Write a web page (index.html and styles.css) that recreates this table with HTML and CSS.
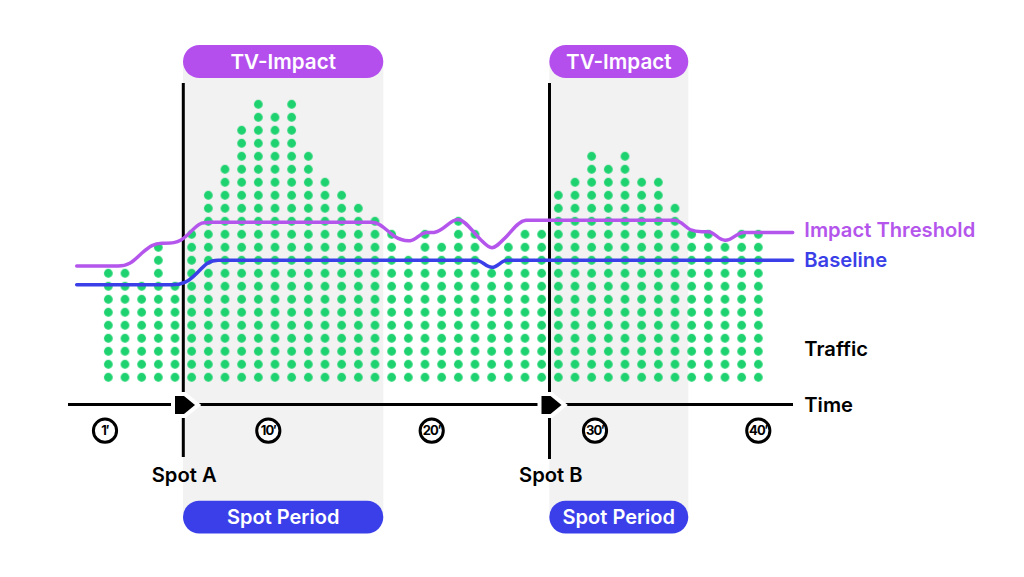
FILE: index.html
```html
<!DOCTYPE html>
<html lang="en">
<head>
<meta charset="utf-8">
<title>TV-Impact</title>
<link rel="stylesheet" href="styles.css">
</head>
<body>
<div class="canvas">
<svg class="chart" width="1024" height="577" viewBox="0 0 1024 577" xmlns="http://www.w3.org/2000/svg">
  <defs>
    <pattern id="dots" patternUnits="userSpaceOnUse" x="100" y="370.8" width="16.6667" height="13">
      <circle class="dot" cx="8.3333" cy="6.5" r="4.4"/>
    </pattern>
  </defs>

  <!-- spot periods -->
  <rect class="period" x="183" y="62" width="200.3" height="455"/>
  <rect class="period" x="549.3" y="62" width="139" height="455"/>

  <!-- traffic dots -->
  <g class="traffic">
    <rect x="100" y="266.8" width="16.6667" height="117"/>
    <rect x="116.667" y="266.8" width="16.6667" height="117"/>
    <rect x="133.333" y="279.8" width="16.6667" height="104"/>
    <rect x="150" y="240.8" width="16.6667" height="143"/>
    <rect x="166.667" y="279.8" width="16.6667" height="104"/>
    <rect x="183.333" y="227.8" width="16.6667" height="156"/>
    <rect x="200" y="188.8" width="16.6667" height="195"/>
    <rect x="216.667" y="162.8" width="16.6667" height="221"/>
    <rect x="233.333" y="123.8" width="16.6667" height="260"/>
    <rect x="250" y="97.8" width="16.6667" height="286"/>
    <rect x="266.667" y="110.8" width="16.6667" height="273"/>
    <rect x="283.333" y="97.8" width="16.6667" height="286"/>
    <rect x="300" y="149.8" width="16.6667" height="234"/>
    <rect x="316.667" y="175.8" width="16.6667" height="208"/>
    <rect x="333.333" y="188.8" width="16.6667" height="195"/>
    <rect x="350" y="201.8" width="16.6667" height="182"/>
    <rect x="366.667" y="214.8" width="16.6667" height="169"/>
    <rect x="383.333" y="227.8" width="16.6667" height="156"/>
    <rect x="400" y="253.8" width="16.6667" height="130"/>
    <rect x="416.667" y="227.8" width="16.6667" height="156"/>
    <rect x="433.333" y="240.8" width="16.6667" height="143"/>
    <rect x="450" y="214.8" width="16.6667" height="169"/>
    <rect x="466.667" y="227.8" width="16.6667" height="156"/>
    <rect x="483.333" y="266.8" width="16.6667" height="117"/>
    <rect x="500" y="240.8" width="16.6667" height="143"/>
    <rect x="516.667" y="227.8" width="16.6667" height="156"/>
    <rect x="533.333" y="227.8" width="16.6667" height="156"/>
    <rect x="550" y="188.8" width="16.6667" height="195"/>
    <rect x="566.667" y="175.8" width="16.6667" height="208"/>
    <rect x="583.333" y="149.8" width="16.6667" height="234"/>
    <rect x="600" y="162.8" width="16.6667" height="221"/>
    <rect x="616.667" y="149.8" width="16.6667" height="234"/>
    <rect x="633.333" y="175.8" width="16.6667" height="208"/>
    <rect x="650" y="175.8" width="16.6667" height="208"/>
    <rect x="666.667" y="201.8" width="16.6667" height="182"/>
    <rect x="683.333" y="227.8" width="16.6667" height="156"/>
    <rect x="700" y="227.8" width="16.6667" height="156"/>
    <rect x="716.667" y="240.8" width="16.6667" height="143"/>
    <rect x="733.333" y="227.8" width="16.6667" height="156"/>
    <rect x="750" y="227.8" width="16.6667" height="156"/>
  </g>

  <!-- spot markers -->
  <line class="spot-line" x1="183.3" y1="83" x2="183.3" y2="457"/>
  <line class="spot-line" x1="549.5" y1="83" x2="549.5" y2="459"/>

  <!-- time axis -->
  <line class="axis" x1="68" y1="404.5" x2="793" y2="404.5"/>
  <polygon class="arrow" points="175,396 184,396 195,405 184,414 175,414"/>
  <polygon class="arrow" points="541.5,396 550.5,396 561.5,405 550.5,414 541.5,414"/>

  <!-- baseline & threshold -->
  <path class="baseline" d="M76.7 284.7 H172 C182 284.7 188 282 196 274 C204 266 208 260.3 218 260.3 H476 C482 260.3 486 267.3 492 267.3 C498 267.3 501 260.3 507 260.3 H792.7"/>
  <path class="threshold" d="M76.7 266 H118 C130 266 134 260 142 253 C150 246 154 243.5 162 243.3 C172 243 176 243 181 240 C188 236 194 227 200 224 C203 222.5 206 222.3 210 222.3 H372 C380 222.3 386 230 394 236 C400 240 404 241 410 240.7 C416 240 419 234 426 232.5 H434 C444 231 450 219.5 458 219.5 C466 220 474 234 482 241 C486 245 489 247.7 492 247.7 C496 247.7 500 243 506 237 C512 231 518 221 526 220.3 H674 C681 220.3 685 227 690 229.5 C694 231.3 697 231.7 702 231.7 H708 C715 232 718 240 725 240.3 C733 240.6 736 232.5 744 232.5 H792.7"/>

  <!-- minute markers -->
  <g class="tick">
    <circle cx="105" cy="430.7" r="11.6"/>
    <text x="105" y="435.4">1′</text>
  </g>
  <g class="tick">
    <circle cx="268.3" cy="430.7" r="11.6"/>
    <text x="268.3" y="435.4">10′</text>
  </g>
  <g class="tick">
    <circle cx="431.7" cy="430.7" r="11.6"/>
    <text x="431.7" y="435.4">20′</text>
  </g>
  <g class="tick">
    <circle cx="595" cy="430.7" r="11.6"/>
    <text x="595" y="435.4">30′</text>
  </g>
  <g class="tick">
    <circle cx="758.3" cy="430.7" r="11.6"/>
    <text x="758.3" y="435.4">40′</text>
  </g>

  <!-- pills -->
  <rect class="pill pill-impact" x="183" y="45" width="200.3" height="33" rx="16.5"/>
  <text class="pill-text pill-text-impact" x="283.2" y="68.6">TV-Impact</text>
  <rect class="pill pill-impact" x="549.3" y="45" width="139" height="33" rx="16.5"/>
  <text class="pill-text pill-text-impact" x="618.8" y="68.6">TV-Impact</text>

  <rect class="pill pill-spot" x="183" y="500.7" width="200.3" height="32.7" rx="16.3"/>
  <text class="pill-text" x="283.2" y="523.6">Spot Period</text>
  <rect class="pill pill-spot" x="549.3" y="500.7" width="139" height="32.7" rx="16.3"/>
  <text class="pill-text" x="618.8" y="523.6">Spot Period</text>

  <!-- labels -->
  <text class="label" x="151.7" y="481.7">Spot A</text>
  <text class="label" x="519" y="481.7">Spot B</text>
  <text class="label label-threshold" x="804.3" y="236.7">Impact Threshold</text>
  <text class="label label-baseline" x="804.3" y="267.3">Baseline</text>
  <text class="label" x="804.3" y="356">Traffic</text>
  <text class="label" x="804.3" y="411.7">Time</text>
</svg>
</div>
</body>
</html>
```

FILE: styles.css
```css
html, body {
  margin: 0;
  padding: 0;
  background: #ffffff;
}

.canvas {
  width: 1024px;
  height: 577px;
  overflow: hidden;
}

.chart {
  display: block;
  font-family: "Inter", "Liberation Sans", sans-serif;
}

.period {
  fill: #f2f2f2;
}

.dot {
  fill: #1ed36f;
}

.traffic rect {
  fill: url(#dots);
}

.spot-line {
  stroke: #000000;
  stroke-width: 3;
}

.axis {
  stroke: #000000;
  stroke-width: 3;
}

.arrow {
  fill: #000000;
  stroke: #ffffff;
  stroke-width: 8;
  stroke-linejoin: miter;
  paint-order: stroke;
}

.baseline {
  fill: none;
  stroke: #3b3fe8;
  stroke-width: 3.5;
  stroke-linecap: round;
}

.threshold {
  fill: none;
  stroke: #b455ec;
  stroke-width: 3.5;
  stroke-linecap: round;
}

.tick circle {
  fill: #ffffff;
  stroke: #000000;
  stroke-width: 3;
}

.tick text {
  font-size: 13px;
  font-weight: 700;
  letter-spacing: -0.9px;
  text-anchor: middle;
  fill: #000000;
}

.pill-impact {
  fill: #b44fee;
}

.pill-spot {
  fill: #3a3fe9;
}

.pill-text {
  font-size: 20px;
  font-weight: 600;
  fill: #ffffff;
  text-anchor: middle;
}

.pill-text-impact {
  font-size: 20.6px;
}

.label {
  font-size: 20.2px;
  font-weight: 600;
  fill: #000000;
}

.label-threshold {
  fill: #b455ec;
}

.label-baseline {
  fill: #3b3fe8;
}
```
